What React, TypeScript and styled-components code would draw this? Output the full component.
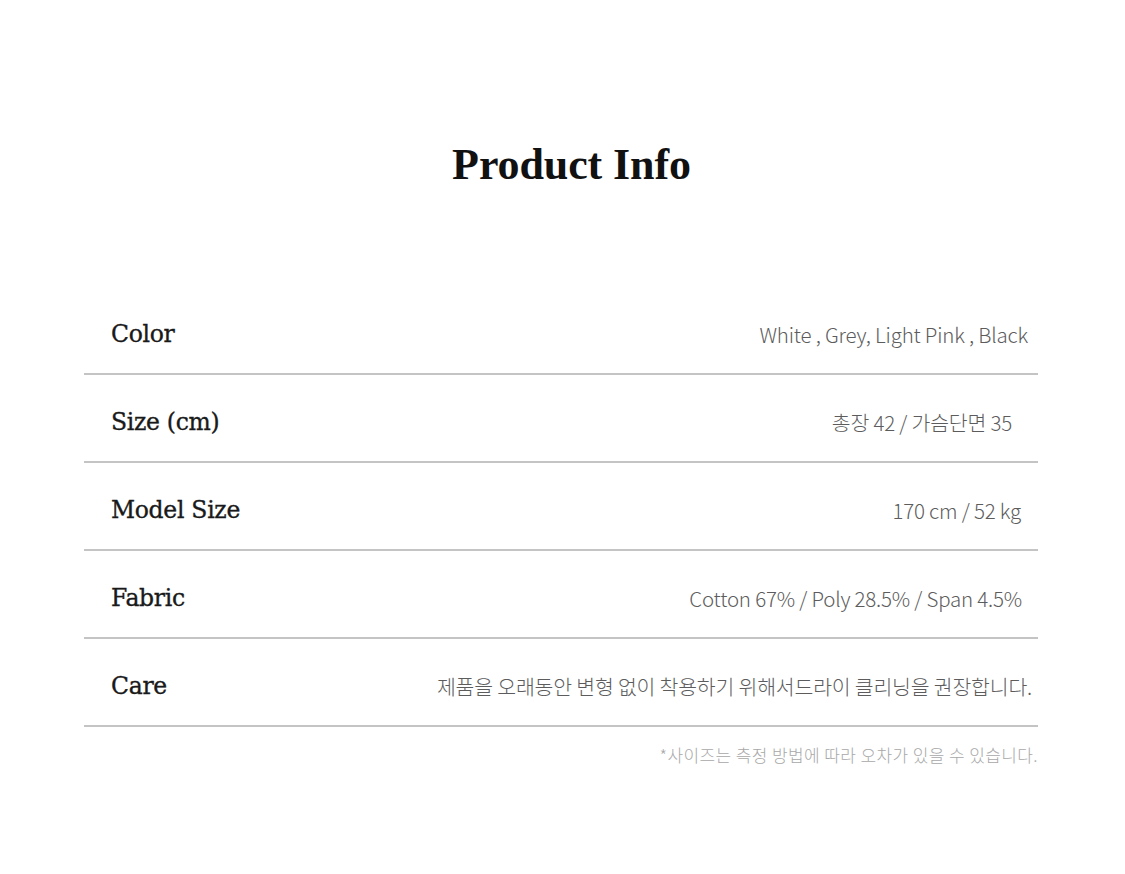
import React from 'react';
import styled, { createGlobalStyle } from 'styled-components';

const GlobalStyle = createGlobalStyle`
	html, body {
		margin: 0;
		padding: 0;
		background: #ffffff;
	}
`;

const rows = [
	{ label: 'Color', value: 'White , Grey, Light Pink , Black', inset: 10 },
	{ label: 'Size (cm)', value: '총장 42 / 가슴단면 35', inset: 26 },
	{ label: 'Model Size', value: '170 cm / 52 kg', inset: 17 },
	{ label: 'Fabric', value: 'Cotton 67% / Poly 28.5% / Span 4.5%', inset: 16 },
	{ label: 'Care', value: '제품을 오래동안 변형 없이 착용하기 위해서드라이 클리닝을 권장합니다.', inset: 6 },
];

const App: React.FC = () => {
	return (
		<>
			<GlobalStyle />
			<Page>
				<Title>Product Info</Title>
				<Table>
					{rows.map((row) => (
						<Row key={row.label}>
							<Label>{row.label}</Label>
							<Value inset={row.inset}>{row.value}</Value>
						</Row>
					))}
				</Table>
				<Note>*사이즈는 측정 방법에 따라 오차가 있을 수 있습니다.</Note>
			</Page>
		</>
	);
};

interface insetProps {
	inset: number;
}

const Page = styled.div`
	width: 954px;
	margin: 0 0 0 84px;
	padding-top: 140px;
	display: flex;
	flex-direction: column;
`;

const Title = styled.h1`
	margin: 0;
	padding-left: 21px;
	height: 50px;
	line-height: 50px;
	text-align: center;
	font-family: 'Liberation Serif', serif;
	font-weight: 700;
	font-size: 44px;
	color: #111111;
	letter-spacing: -0.1px;
`;

const Table = styled.div`
	margin-top: 97px;
	display: flex;
	flex-direction: column;
`;

const Row = styled.div`
	height: 88px;
	box-sizing: border-box;
	padding: 8px 0 0 27px;
	display: flex;
	align-items: center;
	justify-content: space-between;
	border-bottom: 2px solid #c4c4c4;
`;

const Label = styled.span`
	font-family: 'DejaVu Serif', serif;
	font-size: 23.5px;
	color: #1a1a1a;
	letter-spacing: -0.3px;
	-webkit-text-stroke: 0.35px #1a1a1a;
`;

const Value = styled.span<insetProps>`
	padding-right: ${({ inset }) => inset}px;
	font-family: 'Noto Sans CJK KR', 'Noto Sans', sans-serif;
	font-weight: 300;
	font-size: 20.5px;
	color: #5c5c5c;
	letter-spacing: -0.2px;
`;

const Note = styled.p`
	margin: 17px 0 0;
	text-align: right;
	font-family: 'Noto Sans CJK KR', 'Noto Sans', sans-serif;
	font-weight: 300;
	font-size: 17px;
	line-height: 22px;
	color: #a8a8a8;
	letter-spacing: 0.4px;
`;

export default App;
